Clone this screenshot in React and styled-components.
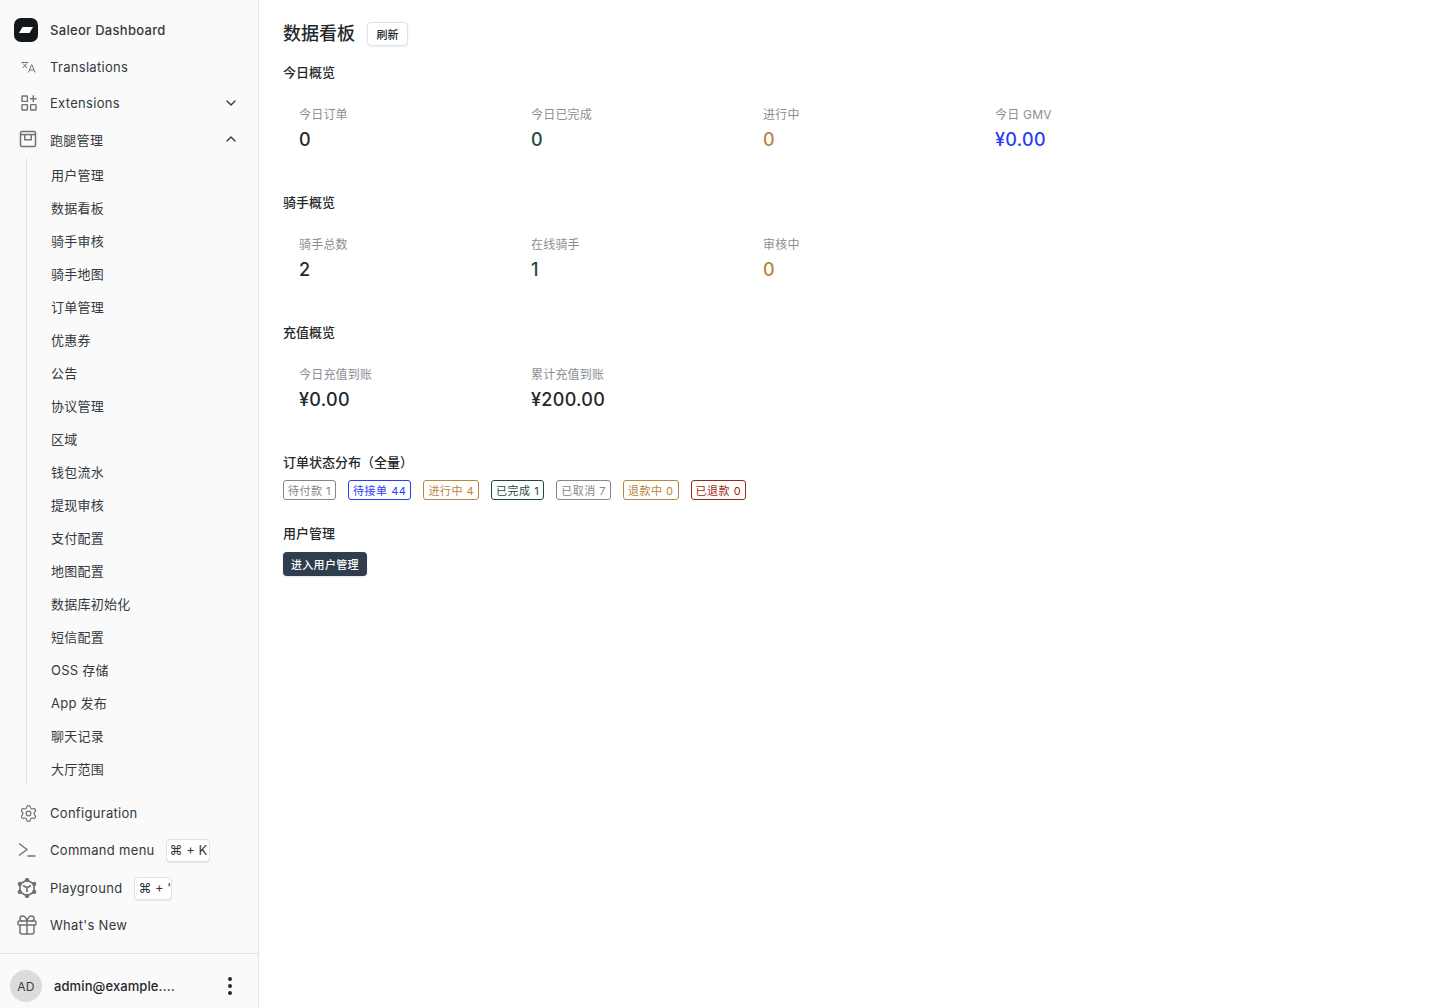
import React from 'react'
import styled, { createGlobalStyle } from 'styled-components'
import { ChevronDown, ChevronUp, Gift, Settings } from 'lucide-react'

const GlobalStyle = createGlobalStyle`
html, body {
  margin: 0;
  padding: 0;
  background: #fff;
  font-family: Inter, "Noto Sans CJK SC", sans-serif;
  color: #25282b;
}
* { box-sizing: border-box; }
`

const Page = styled.div`
display: flex;
width: 100%;
height: 1008px;
overflow: hidden;
`

const Sidebar = styled.aside`
width: 259px;
flex-shrink: 0;
height: 100%;
background: #fafafa;
border-right: 1px solid #e4e7ea;
display: flex;
flex-direction: column;
`

const Nav = styled.nav`
flex: 1;
display: flex;
flex-direction: column;
padding-top: 12px;
min-height: 0;
`

const NavRow = styled.div`
height: ${p => p.$h || 36}px;
display: flex;
align-items: center;
padding-left: 14px;
font-size: 13px;
letter-spacing: 0.3px;
color: #32393f;
font-weight: ${p => p.$strong ? 500 : 400};
`

const IconSlot = styled.span`
width: ${p => p.$w || 28}px;
height: 24px;
margin-right: ${p => 36 - (p.$w || 28)}px;
flex-shrink: 0;
display: flex;
align-items: center;
justify-content: center;
color: #6f7376;
`

const LogoBox = styled.span`
width: 24px;
height: 24px;
margin-right: 12px;
border-radius: 7px;
background: #15181a;
display: flex;
align-items: center;
justify-content: center;
`

const Caret = styled.span`
margin-left: auto;
margin-right: 19px;
display: flex;
color: #32393f;
`

const SubList = styled.div`
margin-top: 1px;
margin-left: 26px;
border-left: 1px solid #dfe3ee;
display: flex;
flex-direction: column;
margin-bottom: 10px;
`

const SubItem = styled.div`
height: 33px;
display: flex;
align-items: center;
padding-left: 24px;
font-size: 13px;
letter-spacing: 0.25px;
color: #32393f;
`

const Kbd = styled.span`
height: 23px;
margin-left: ${p => p.$gap}px;
padding: 0 ${p => p.$pr ?? 2}px 0 3px;
display: inline-flex;
align-items: center;
border: 1px solid #dfe3e8;
border-radius: 4px;
background: #fff;
box-shadow: 0 1px 1px rgba(0,0,0,0.08);
font-size: 13px;
letter-spacing: 0;
white-space: pre;
color: #32393f;
`

const UserBar = styled.div`
height: 55px;
flex-shrink: 0;
border-top: 1px solid #dfe3e6;
display: flex;
align-items: center;
padding: 10px 0 0 10px;
`

const Avatar = styled.div`
width: 32px;
height: 32px;
border-radius: 50%;
background: #dcdcdc;
color: #3a4046;
font-size: 12px;
letter-spacing: 0.3px;
display: flex;
align-items: center;
justify-content: center;
margin-right: 12px;
`

const UserName = styled.div`
font-size: 13px;
font-weight: 500;
letter-spacing: 0.1px;
color: #25282b;
`

const Dots = styled.div`
margin-left: auto;
margin-right: 26px;
display: flex;
flex-direction: column;
gap: 3px;
span {
  width: 4px;
  height: 4px;
  border-radius: 50%;
  background: #25282b;
}
`

const Main = styled.main`
flex: 1;
padding: 20px 24px;
min-width: 0;
`

const TitleRow = styled.div`
height: 28px;
display: flex;
align-items: center;
gap: 12px;
margin-bottom: 14px;
`

const Title = styled.h1`
margin: 0;
font-size: 18px;
line-height: 28px;
font-weight: 500;
color: #25282b;
`

const RefreshButton = styled.button`
width: 41px;
height: 24px;
padding: 0;
border: 1px solid #dfe3e8;
border-radius: 4px;
background: #fff;
box-shadow: 0 1px 2px rgba(0,0,0,0.08);
font-family: inherit;
font-size: 11px;
font-weight: 500;
color: #25282b;
`

const SectionTitle = styled.h2`
margin: 0;
font-size: 13px;
line-height: 20px;
font-weight: 500;
color: #25282b;
`

const Section = styled.section`
margin-bottom: ${p => p.$mb ?? 24}px;
`

const StatGrid = styled.div`
margin-top: 7px;
display: grid;
grid-template-columns: repeat(4, 232px);
`

const Stat = styled.div`
padding: 16px;
`

const StatLabel = styled.div`
font-size: 12px;
line-height: 20px;
letter-spacing: 0.2px;
color: #8a8f94;
`

const StatValue = styled.div`
margin-top: 3px;
font-size: 18px;
line-height: 24px;
font-weight: 500;
letter-spacing: 0.3px;
color: ${p => p.$color || '#25282b'};
`

const ChipRow = styled.div`
margin-top: 8px;
display: flex;
gap: 12px;
`

const Chip = styled.span`
height: 20px;
padding: 0 4px;
display: inline-flex;
align-items: center;
border: 1px solid ${p => p.$color};
border-radius: 3px;
font-size: 11px;
letter-spacing: 0.5px;
color: ${p => p.$color};
`

const DarkButton = styled.button`
margin-top: 9px;
height: 24px;
padding: 0 8px;
border: none;
border-radius: 4px;
background: #2f3d4d;
box-shadow: 0 1px 2px rgba(0,0,0,0.12);
font-family: inherit;
font-size: 11px;
font-weight: 500;
letter-spacing: 0.3px;
color: #fff;
display: block;
`

const LogoMark = () => (
  <svg width="14" height="6" viewBox="0 0 14 6">
    <path d="M3.5 0H14L10.5 6H0Z" fill="#fff" />
  </svg>
)

const TranslateIcon = () => (
  <svg width="15" height="12" viewBox="0 0 15 12" fill="none" stroke="currentColor" strokeWidth="1">
    <path d="M0.5 1.5H7M2 2.5L6 7M6 2.5L1.5 7" />
    <path d="M7.5 11.5L10.5 3.8H11L14 11.5M8.7 9H12.8" />
  </svg>
)

const ExtensionsIcon = () => (
  <svg width="18" height="18" viewBox="0 0 18 18" fill="none" stroke="currentColor" strokeWidth="1.4">
    <rect x="2" y="2" width="5.4" height="5.4" rx="0.5" />
    <rect x="2" y="10.6" width="5.4" height="5.4" rx="0.5" />
    <rect x="10.6" y="10.6" width="5.4" height="5.4" rx="0.5" />
    <path d="M13.3 1.3V8M10 4.7H16.6" />
  </svg>
)

const StoreIcon = () => (
  <svg width="18" height="18" viewBox="0 0 18 18" fill="none" stroke="currentColor" strokeWidth="1.5">
    <rect x="1.5" y="1.5" width="15" height="15" rx="1.5" />
    <path d="M1.5 4.6H16.5" />
    <path d="M5.8 4.8V9.8H12.2V4.8" />
  </svg>
)

const PromptIcon = () => (
  <svg width="20" height="18" viewBox="0 0 20 18" fill="none" stroke="currentColor" strokeWidth="1.4">
    <path d="M2 2.5L10 8.5L2 14.5M10.5 15H18.5" />
  </svg>
)

const PlaygroundIcon = () => (
  <svg width="20" height="20" viewBox="0 0 20 20" fill="none" stroke="currentColor" strokeWidth="1.7">
    <path d="M10 2L17 6V14L10 18L3 14V6Z" />
    <path d="M6 7.4L10 9.8L14 7.4M10 9.8V14" />
    <circle cx="10" cy="2" r="1.3" fill="currentColor" />
    <circle cx="2.8" cy="6" r="1.3" fill="currentColor" />
    <circle cx="17.2" cy="6" r="1.3" fill="currentColor" />
    <circle cx="2.8" cy="14" r="1.3" fill="currentColor" />
    <circle cx="17.2" cy="14" r="1.3" fill="currentColor" />
    <circle cx="10" cy="18" r="1.3" fill="currentColor" />
  </svg>
)

const subItems = ['用户管理', '数据看板', '骑手审核', '骑手地图', '订单管理', '优惠券', '公告', '协议管理', '区域', '钱包流水', '提现审核', '支付配置', '地图配置', '数据库初始化', '短信配置', 'OSS 存储', 'App 发布', '聊天记录', '大厅范围']

const colors = {
  gray: '#85888b',
  blue: '#2a3cf5',
  orange: '#b9853f',
  green: '#1f4a3c',
  red: '#9c2a12',
}

const chips = [
  ['待付款 1', colors.gray],
  ['待接单 44', colors.blue],
  ['进行中 4', colors.orange],
  ['已完成 1', colors.green],
  ['已取消 7', colors.gray],
  ['退款中 0', colors.orange],
  ['已退款 0', colors.red],
]

const sections = [
  {
    title: '今日概览',
    stats: [
      ['今日订单', '0'],
      ['今日已完成', '0', colors.green],
      ['进行中', '0', colors.orange],
      ['今日 GMV', '¥0.00', colors.blue],
    ],
  },
  {
    title: '骑手概览',
    stats: [
      ['骑手总数', '2'],
      ['在线骑手', '1', colors.green],
      ['审核中', '0', colors.orange],
    ],
  },
  {
    title: '充值概览',
    stats: [
      ['今日充值到账', '¥0.00'],
      ['累计充值到账', '¥200.00'],
    ],
  },
]

export default function App() {
  return (
    <Page>
      <GlobalStyle />
      <Sidebar>
        <Nav>
          <NavRow $strong>
            <LogoBox><LogoMark /></LogoBox>
            Saleor Dashboard
          </NavRow>
          <NavRow $h={37}>
            <IconSlot><TranslateIcon /></IconSlot>
            Translations
          </NavRow>
          <NavRow>
            <IconSlot $w={29}><ExtensionsIcon /></IconSlot>
            Extensions
            <Caret><ChevronDown size={16} /></Caret>
          </NavRow>
          <NavRow>
            <IconSlot><StoreIcon /></IconSlot>
            跑腿管理
            <Caret><ChevronUp size={16} /></Caret>
          </NavRow>
          <SubList>
            {subItems.map(s => <SubItem key={s}>{s}</SubItem>)}
          </SubList>
          <NavRow>
            <IconSlot><Settings size={19} strokeWidth={1.5} /></IconSlot>
            Configuration
          </NavRow>
          <NavRow $h={38}>
            <IconSlot $w={25}><PromptIcon /></IconSlot>
            Command menu
            <Kbd $gap={11}>⌘ + K</Kbd>
          </NavRow>
          <NavRow $h={38}>
            <IconSlot $w={25}><PlaygroundIcon /></IconSlot>
            Playground
            <Kbd $gap={12} $pr={0}>⌘ + '</Kbd>
          </NavRow>
          <NavRow>
            <IconSlot $w={25}><Gift size={24} strokeWidth={1.5} /></IconSlot>
            What's New
          </NavRow>
        </Nav>
        <UserBar>
          <Avatar>AD</Avatar>
          <UserName>admin@example....</UserName>
          <Dots><span /><span /><span /></Dots>
        </UserBar>
      </Sidebar>
      <Main>
        <TitleRow>
          <Title>数据看板</Title>
          <RefreshButton>刷新</RefreshButton>
        </TitleRow>
        {sections.map(sec => (
          <Section key={sec.title}>
            <SectionTitle>{sec.title}</SectionTitle>
            <StatGrid>
              {sec.stats.map(([label, value, color]) => (
                <Stat key={label}>
                  <StatLabel>{label}</StatLabel>
                  <StatValue $color={color}>{value}</StatValue>
                </Stat>
              ))}
            </StatGrid>
          </Section>
        ))}
        <Section $mb={23}>
          <SectionTitle>订单状态分布（全量）</SectionTitle>
          <ChipRow>
            {chips.map(([text, color]) => <Chip key={text} $color={color}>{text}</Chip>)}
          </ChipRow>
        </Section>
        <Section>
          <SectionTitle>用户管理</SectionTitle>
          <DarkButton>进入用户管理</DarkButton>
        </Section>
      </Main>
    </Page>
  )
}
